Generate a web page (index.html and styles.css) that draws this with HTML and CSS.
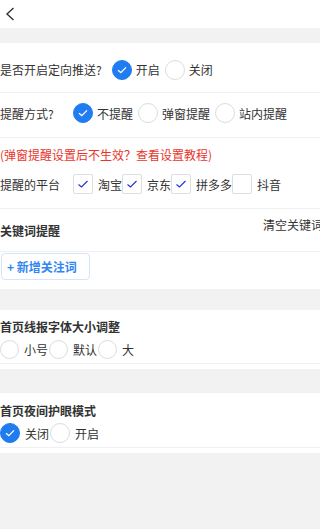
FILE: index.html
```html
<!DOCTYPE html>
<html lang="zh-CN">
<head>
  <meta charset="UTF-8">
  <meta name="viewport" content="width=device-width, initial-scale=1.0">
  <title>推送设置</title>
  <link rel="stylesheet" href="styles.css">
</head>
<body>
  <div class="header">
    <svg class="back" width="10" height="14" viewBox="0 0 10 14">
      <path d="M8.5 1 L2 7 L8.5 13" fill="none" stroke="#333" stroke-width="1.4"/>
    </svg>
  </div>

  <div class="section push-section">
    <div class="row row-push">
      <span class="label">是否开启定向推送?</span>
      <span class="radio checked"><svg width="12" height="10" viewBox="0 0 12 10"><path d="M2 5.2 L4.8 7.6 L10 2.4" fill="none" stroke="#fff" stroke-width="1.3"/></svg></span>
      <span class="opt">开启</span>
      <span class="radio"></span>
      <span class="opt">关闭</span>
    </div>

    <div class="row row-mode">
      <span class="label label-wide">提醒方式?</span>
      <span class="radio checked"><svg width="12" height="10" viewBox="0 0 12 10"><path d="M2 5.2 L4.8 7.6 L10 2.4" fill="none" stroke="#fff" stroke-width="1.3"/></svg></span>
      <span class="opt">不提醒</span>
      <span class="radio"></span>
      <span class="opt">弹窗提醒</span>
      <span class="radio"></span>
      <span class="opt">站内提醒</span>
    </div>

    <div class="tip">(弹窗提醒设置后不生效？查看设置教程)</div>

    <div class="row row-platform">
      <span class="label label-wide">提醒的平台</span>
      <span class="checkbox"><svg width="12" height="10" viewBox="0 0 12 10"><path d="M1.5 5.5 L4.5 8 L10.5 2" fill="none" stroke="#2336d6" stroke-width="1.2"/></svg></span>
      <span class="opt">淘宝</span>
      <span class="checkbox"><svg width="12" height="10" viewBox="0 0 12 10"><path d="M1.5 5.5 L4.5 8 L10.5 2" fill="none" stroke="#2336d6" stroke-width="1.2"/></svg></span>
      <span class="opt">京东</span>
      <span class="checkbox"><svg width="12" height="10" viewBox="0 0 12 10"><path d="M1.5 5.5 L4.5 8 L10.5 2" fill="none" stroke="#2336d6" stroke-width="1.2"/></svg></span>
      <span class="opt">拼多多</span>
      <span class="checkbox"></span>
      <span class="opt">抖音</span>
    </div>

    <div class="keyword-head">
      <span class="title">关键词提醒</span>
      <span class="clear">清空关键词</span>
    </div>

    <button class="add-btn">+ 新增关注词</button>
  </div>

  <div class="section font-section">
    <div class="title">首页线报字体大小调整</div>
    <div class="row row-small">
      <span class="radio"></span>
      <span class="opt">小号</span>
      <span class="radio"></span>
      <span class="opt">默认</span>
      <span class="radio"></span>
      <span class="opt">大</span>
    </div>
  </div>

  <div class="section night-section">
    <div class="title">首页夜间护眼模式</div>
    <div class="row row-small">
      <span class="radio checked"><svg width="12" height="10" viewBox="0 0 12 10"><path d="M2 5.2 L4.8 7.6 L10 2.4" fill="none" stroke="#fff" stroke-width="1.3"/></svg></span>
      <span class="opt">关闭</span>
      <span class="radio"></span>
      <span class="opt">开启</span>
    </div>
  </div>
</body>
</html>
```

FILE: styles.css
```css
html {
  overflow: hidden;
}

body {
  margin: 0;
  padding: 0;
  background-color: #f2f2f2;
  font-family: "Noto Sans CJK SC", "Noto Sans", sans-serif;
  font-size: 12px;
  color: #333;
  height: 529px;
}

.header {
  height: 28px;
  background-color: #fff;
  padding-left: 5px;
  padding-top: 7px;
  box-sizing: border-box;
}

.back {
  display: block;
}

.section {
  background-color: #fff;
}

.push-section {
  margin-top: 15px;
  padding-bottom: 9px;
}

.row {
  display: flex;
  align-items: center;
  white-space: nowrap;
}

.row-push {
  height: 50px;
  padding-top: 4px;
  box-sizing: border-box;
  border-bottom: 1px solid #f0f0f0;
}

.row-mode {
  height: 45px;
  padding-bottom: 4px;
  box-sizing: border-box;
  border-bottom: 1px solid #f0f0f0;
}

.label {
  margin-right: 10px;
}

.label-wide {
  width: 73px;
  margin-right: 0;
}

.radio {
  width: 20px;
  height: 20px;
  box-sizing: border-box;
  border: 1px solid #dcdcdc;
  border-radius: 50%;
  display: flex;
  align-items: center;
  justify-content: center;
  flex-shrink: 0;
}

.radio.checked {
  background-color: #1f7cf1;
  border-color: #1f7cf1;
}

.opt {
  margin: 0 5px 0 4px;
}

.checkbox {
  width: 20px;
  height: 20px;
  box-sizing: border-box;
  border: 1px solid #dedede;
  border-radius: 2px;
  display: flex;
  align-items: center;
  justify-content: center;
  flex-shrink: 0;
}

.row-platform .opt {
  margin: 0 0 0 5px;
  min-width: 24px;
}

.tip {
  color: #e8352c;
  line-height: 20px;
  margin-top: 7px;
}

.row-platform {
  height: 20px;
  margin-top: 9px;
  padding-bottom: 14px;
  border-bottom: 1px solid #f0f0f0;
}

.keyword-head {
  display: flex;
  justify-content: space-between;
  height: 42px;
  border-bottom: 1px solid #f0f0f0;
  white-space: nowrap;
}

.title {
  font-weight: bold;
  line-height: 20px;
}

.keyword-head .title {
  margin-top: 12px;
}

.clear {
  line-height: 20px;
  margin-top: 6px;
  margin-right: -3px;
}

.add-btn {
  display: block;
  margin: 1px 0 0 1px;
  width: 89px;
  height: 27px;
  padding: 0 0 0 5px;
  text-align: left;
  background-color: #fff;
  border: 1px solid #d4e4fa;
  border-radius: 4px;
  color: #2f86f2;
  font-family: inherit;
  font-size: 12px;
  font-weight: bold;
}

.font-section {
  margin-top: 21px;
  padding-top: 7px;
  padding-bottom: 5px;
}

.row-small {
  margin-top: 2px;
  height: 20px;
  padding-bottom: 4px;
  border-bottom: 1px solid #f0f0f0;
}

.row-small .opt {
  margin: 0 1px 0 5px;
}

.font-section .row-small .radio {
  width: 19px;
  height: 19px;
}

.night-section {
  margin-top: 24px;
  padding-top: 8px;
  padding-bottom: 5px;
}
```
